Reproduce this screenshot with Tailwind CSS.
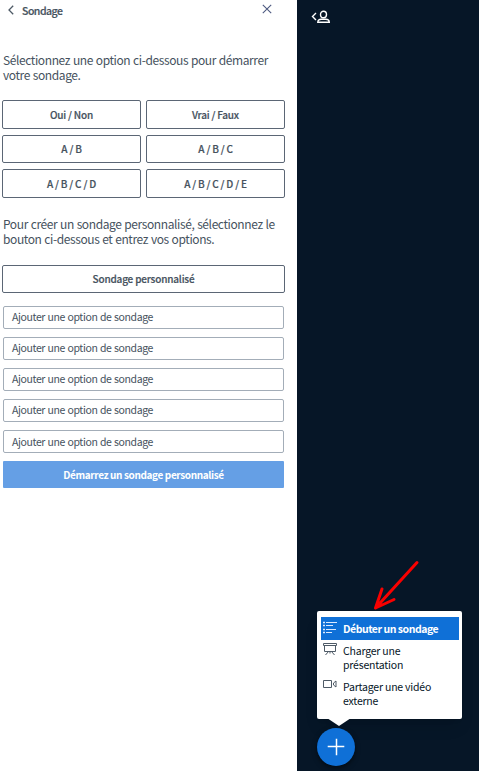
<!DOCTYPE html>
<html lang="fr">
<head>
<meta charset="utf-8">
<title>Sondage</title>
<script src="https://cdn.jsdelivr.net/npm/@tailwindcss/browser@4"></script>
</head>
<body class="flex h-[771px] w-[479px] overflow-hidden bg-white font-['Noto_Sans_CJK_SC','Noto_Sans',sans-serif] text-[#46525e]">
<section class="h-full w-[297px] shrink-0 pl-[2px]">
  <header class="flex h-5 items-center pl-[6px] pr-[25px]">
    <svg class="h-[10px] w-[6px]" viewBox="0 0 6 10" fill="none" stroke="#4e5a66" stroke-width="1.3"><path d="M5.2.7 1 5l4.2 4.3"/></svg>
    <h1 class="mt-px ml-2 text-[10.5px] leading-5 font-medium tracking-[-0.5px] [-webkit-text-stroke:0.2px]">Sondage</h1>
    <svg class="mb-[2px] ml-auto h-[10px] w-[10px]" viewBox="0 0 10 10" fill="none" stroke="#4e5a80" stroke-width="1.1"><path d="m.8.8 8.400 8.400M9.200.8.8 9.200"/></svg>
  </header>
  <p class="mt-8 pl-px text-[12px] leading-[15px] tracking-[-0.4px] [word-spacing:0.5px] whitespace-nowrap">Sélectionnez une option ci-dessous pour démarrer<br>votre sondage.</p>
  <div class="mt-[18px] grid w-[283px] grid-cols-2 grid-rows-[29px_28px_29px] gap-x-[5px] gap-y-[6px] text-[10px] font-medium tracking-[-0.2px] [-webkit-text-stroke:0.2px]">
    <button class="rounded-[2px] border border-[#5b6675]">Oui / Non</button>
    <button class="rounded-[2px] border border-[#5b6675]">Vrai / Faux</button>
    <button class="rounded-[2px] border border-[#5b6675] pb-px">A / B</button>
    <button class="rounded-[2px] border border-[#5b6675] pb-px">A / B / C</button>
    <button class="rounded-[2px] border border-[#5b6675]">A / B / C / D</button>
    <button class="rounded-[2px] border border-[#5b6675]">A / B / C / D / E</button>
  </div>
  <p class="mt-[18px] pl-px text-[12px] leading-[15px] tracking-[-0.4px] [word-spacing:0.5px] whitespace-nowrap">Pour créer un sondage personnalisé, sélectionnez le<br>bouton ci-dessous et entrez vos options.</p>
  <button class="mt-[19px] block h-7 w-[283px] rounded-[2px] border border-[#5b6675] pb-px text-[10px] font-medium tracking-[-0.18px] [-webkit-text-stroke:0.2px]">Sondage personnalisé</button>
  <div class="mt-[13px] ml-px flex w-[281px] flex-col gap-2 text-[10.5px] leading-5 tracking-[-0.38px] [word-spacing:0.5px]">
    <div class="h-[23px] rounded-[2px] border border-[#a3adb8] pl-2">Ajouter une option de sondage</div>
    <div class="h-[23px] rounded-[2px] border border-[#a3adb8] pl-2">Ajouter une option de sondage</div>
    <div class="h-[23px] rounded-[2px] border border-[#a3adb8] pl-2">Ajouter une option de sondage</div>
    <div class="h-[23px] rounded-[2px] border border-[#a3adb8] pl-2">Ajouter une option de sondage</div>
    <div class="h-[23px] rounded-[2px] border border-[#a3adb8] pl-2 leading-[21px]">Ajouter une option de sondage</div>
    <button class="h-[27px] rounded-[1px] bg-[#659fe5] text-[10px] font-bold tracking-[-0.38px] text-white">Démarrez un sondage personnalisé</button>
  </div>
</section>
<main class="relative h-full flex-1 bg-[#061627]">
  <svg class="absolute top-[10px] left-[14px] h-[14px] w-5" viewBox="0 0 20 14" fill="none" stroke="#fff" stroke-width="1.4"><path d="M5 3 1.500 6.500 5 10"/><ellipse cx="12.500" cy="4.500" rx="3" ry="3.300"/><path d="M6.800 12.300c.1-2.200 1.600-3 3.500-3h4.500c1.900 0 3.400.8 3.500 3z"/></svg>
  <svg class="absolute top-[558px] left-[74px] h-[54px] w-[52px]" viewBox="0 0 52 54" fill="none" stroke="#f90000" stroke-width="3" stroke-linecap="round" stroke-linejoin="round"><path d="M46 4.500 4.500 50M11 31 4.500 50l18.500-8.500"/></svg>
  <div class="absolute top-[611px] left-5 h-[108px] w-[145px] rounded-[2px] bg-white px-1 pt-[6px] text-[10.5px] leading-[14px] tracking-[-0.2px] text-[#061627] shadow-lg">
    <div class="flex h-[23px] w-[138px] bg-[#0f70d7] pl-[2px] font-bold tracking-[-0.48px] text-white">
      <svg class="mt-1 h-[14px] w-[14px]" viewBox="0 0 14 14" fill="none" stroke="#dceaff" stroke-width="1.100"><path d="M3 1.500h11M3 4.500h7M3 8.500h10M3 11.500h6"/><path d="M0 1.500h2M0 4.500h2M0 8.500h2M0 11.500h2" stroke-width="1.500"/></svg>
      <span class="ml-[6px] leading-[23px] whitespace-nowrap">Débuter un sondage</span>
    </div>
    <div class="mt-1 flex pl-[2px]">
      <svg class="-mt-px h-[14px] w-[14px]" viewBox="0 0 14 14" fill="none" stroke="#4e5a66" stroke-width="1"><path d="M.5.5h13v2H.5zM1.500 2.500v6h11v-6M7 8.500v2M5.500 8.500l-3 3.500M8.500 8.500l3 3.500"/></svg>
      <span class="ml-[6px]">Charger une<br>présentation</span>
    </div>
    <div class="mt-2 flex pl-[2px]">
      <svg class="-mt-px h-[12px] w-[14px]" viewBox="0 0 14 12" fill="none" stroke="#4e5a66" stroke-width="1"><path d="M.5 1.500h8v7h-8zM10.500 4l2.500-2v6l-2.500-2z"/></svg>
      <span class="ml-[6px] whitespace-nowrap">Partager une vidéo<br>externe</span>
    </div>
  </div>
  <svg class="absolute top-[718px] left-[30px] h-[9px] w-6" viewBox="0 0 24 9"><path fill="#fff" d="M0 0h24L12 8z"/></svg>
  <button class="absolute top-[728px] left-5 flex h-[38px] w-[38px] items-center justify-center rounded-full bg-[#0f70d7] shadow-[0_2px_5px_#0008]">
    <svg class="h-[18px] w-[18px]" viewBox="0 0 18 18" stroke="#fff" stroke-width="1.500"><path d="M9.500.7v16.600M.7 8.500h16.600"/></svg>
  </button>
</main>
</body>
</html>
